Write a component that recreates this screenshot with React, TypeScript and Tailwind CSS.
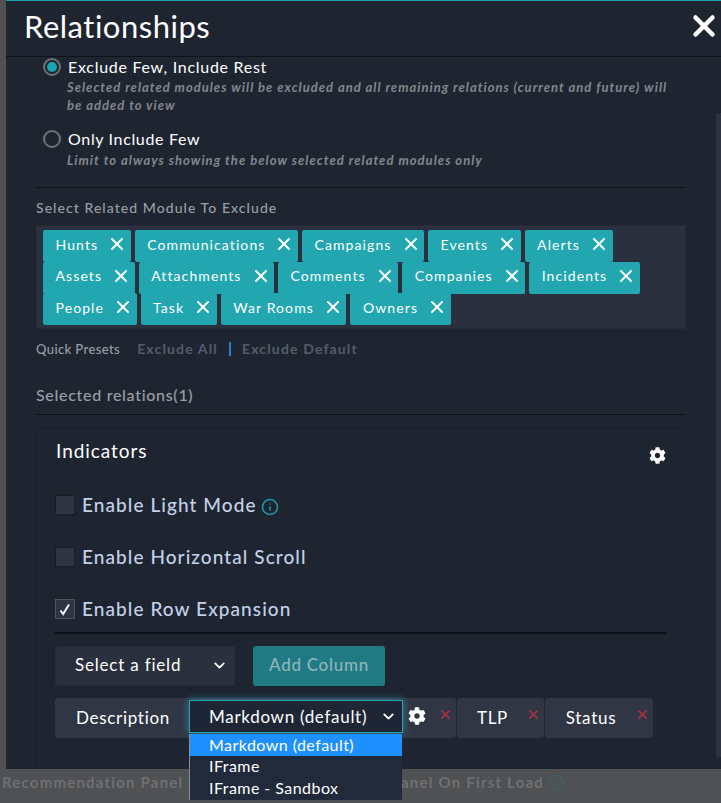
import React from "react";
import { X, Info, ChevronDown } from "lucide-react";
import { FaCog } from "react-icons/fa";

const rows = [
  ["Hunts", "Communications", "Campaigns", "Events", "Alerts"],
  ["Assets", "Attachments", "Comments", "Companies", "Incidents"],
  ["People", "Task", "War Rooms", "Owners"],
];

function Tag({ label }: { label: string }) {
  return (
    <span className="flex h-[32px] items-center gap-[9px] rounded-[2px] bg-[#22a7b1] pb-[4px] pl-[12.5px] pr-[3.5px] text-[14px] tracking-[1.1px] text-white">
      {label}
      <X size={20} strokeWidth={2.4} className="text-white" />
    </span>
  );
}

function CheckRow({ label, checked, info }: { label: string; checked?: boolean; info?: boolean }) {
  return (
    <div className="flex h-[20px] items-center gap-[7px]">
      <span className={`flex h-[20px] w-[20px] items-center justify-center border bg-[#2e3443] ${checked ? "border-[#4c515c]" : "border-[#171c25]"}`}>
        {checked && (
          <svg width="12" height="13" viewBox="0 0 12 13" fill="none">
            <path d="M1.5 7.5 L4.2 11 L10 1.5" stroke="white" strokeWidth="2" />
          </svg>
        )}
      </span>
      <span className="text-[19px] leading-[20px] font-medium tracking-[1.07px] text-[#c4d1e8]">{label}</span>
      {info && <Info size={18} className="ml-[-3px] mt-[3px] text-[#1f9aa5]" />}
    </div>
  );
}

function Chip({ label, width }: { label: string; width: string }) {
  return (
    <div className={`relative flex h-[40px] items-center justify-center rounded-[3px] bg-[#303644] pb-[1px] pr-[16px] text-[17px] tracking-[0.7px] text-white ${width}`}>
      {label}
      <X size={15} strokeWidth={1.8} className="absolute right-[3px] top-[9px] text-[#c9303f]" />
    </div>
  );
}

export default function App() {
  return (
    <div className="relative h-[803px] w-[721px] overflow-hidden bg-[#4f5153] font-['Lato','Open_Sans',sans-serif]">
      <div className="ml-[6px] flex h-[769px] flex-col border-t border-[#17a2ad] bg-[#1e2531]">
        <header className="flex h-[56px] shrink-0 items-center justify-between border-b border-[#0e1218] pb-[5px] pl-[18px] pr-[6px]">
          <h1 className="text-[31px] leading-[50px] text-white tracking-[0.5px]">Relationships</h1>
          <X size={34} strokeWidth={3.2} className="mr-[-6px] text-white" />
        </header>

        <div className="flex flex-1 flex-col pl-[30px] pr-[35px]">
          <label className="ml-[7px] flex h-[20px] items-center gap-[6px]">
            <span className="flex h-[18px] w-[18px] items-center justify-center rounded-full border-2 border-[#707274]">
              <span className="h-[10px] w-[10px] rounded-full bg-[#1aa5b0]" />
            </span>
            <span className="ml-[1px] text-[16px] tracking-[0.72px] text-white">Exclude Few, Include Rest</span>
          </label>
          <p className="ml-[31px] mt-[1px] w-[610px] text-[13px] leading-[18px] font-bold italic tracking-[1px] text-[#82868d]">
            Selected related modules will be excluded and all remaining relations (current and future) will be added to view
          </p>
          <label className="ml-[7px] mt-[15px] flex h-[20px] items-center gap-[6px]">
            <span className="h-[18px] w-[18px] rounded-full border-2 border-[#707274]" />
            <span className="ml-[1px] text-[16px] tracking-[0.65px] text-white">Only Include Few</span>
          </label>
          <p className="ml-[31px] mt-[2px] text-[13px] leading-[18px] font-bold italic tracking-[1.03px] text-[#82868d]">
            Limit to always showing the below selected related modules only
          </p>
          <div className="mt-[18px] h-px bg-[#0e1218]" />

          <div className="mt-[11px] text-[14px] leading-[17px] font-medium tracking-[1.06px] text-[#9a9ea5]">Select Related Module To Exclude</div>
          <div className="mt-[9px] h-[104px] border border-[#252b37] bg-[#2b303e] px-[6px] pt-[4px]">
            {rows.map((row) => (
              <div key={row[0]} className="mb-[-0.5px] flex gap-[4px]">
                {row.map((t) => (
                  <Tag key={t} label={t} />
                ))}
              </div>
            ))}
          </div>
          <div className="mt-[12px] flex h-[16px] items-center text-[14px]">
            <span className="mt-[1px] text-[13px] font-medium tracking-[0.4px] text-[#9a9ea5]">Quick Presets</span>
            <span className="mb-[1px] ml-[17px] font-bold tracking-[1.15px] text-[#545c69]">Exclude All</span>
            <span className="mx-[11px] h-[14px] w-[2px] bg-[#2a7fc4]" />
            <span className="mb-[1px] font-bold tracking-[1.15px] text-[#545c69]">Exclude Default</span>
          </div>
          <div className="mt-[28px] text-[16px] leading-[20px] font-medium tracking-[0.7px] text-[#9a9ea5]">Selected relations(1)</div>
          <div className="mt-[9px] h-px bg-[#0e1218]" />

          <section className="relative mt-[13px] flex-1 border-l border-r border-t border-[#1a202b] pl-[18px] pr-[18px]">
            <div className="flex h-[46px] items-center justify-between pb-[2px]">
              <h2 className="ml-[1px] text-[19px] tracking-[0.95px] text-white">Indicators</h2>
              <span className="mb-[1px] mr-[1px] mt-[10px] text-white"><FaCog size={17} /></span>
            </div>
            <div className="mt-[20px] flex flex-col gap-[32px]">
              <CheckRow label="Enable Light Mode" info />
              <CheckRow label="Enable Horizontal Scroll" />
              <CheckRow label="Enable Row Expansion" checked />
            </div>
            <div className="mt-[13px] h-[2px] bg-[#0e1218]" />
            <div className="mt-[12px] flex gap-[18px]">
              <div className="flex h-[40px] w-[180px] items-center justify-between rounded-[2px] border border-[#252b37] bg-[#2b303e] pb-[2px] pl-[19px] pr-[6px] text-[17px] tracking-[0.8px] text-white">
                Select a field
                <ChevronDown size={17} strokeWidth={2.6} />
              </div>
              <button className="h-[40px] w-[132px] rounded-[3px] bg-[#1f7a84] pb-[2px] text-[17px] font-medium tracking-[0.7px] text-[#8fb4ba]">Add Column</button>
            </div>
            <div className="mt-[12px] flex gap-[1px]">
              <div className="relative flex h-[40px] w-[401px] items-center rounded-[3px] bg-[#303644] pb-[1px] pl-[21px] text-[17px] tracking-[0.7px] text-white">
                Description
                <div className="absolute left-[134px] top-[2px] flex h-[33px] w-[214px] items-center justify-between border border-[#20a5b0] bg-[#1e2635] pl-[19px] pr-[5px] text-[17px] tracking-[0.7px] shadow-[0_0_8px_rgba(70,180,220,0.6)]">
                  Markdown (default)
                  <ChevronDown size={17} strokeWidth={2.6} />
                </div>
                <span className="absolute left-[353px] top-[9px]"><FaCog size={18} /></span>
                <X size={15} strokeWidth={1.8} className="absolute right-[3px] top-[9px] text-[#c9303f]" />
              </div>
              <Chip label="TLP" width="w-[87px]" />
              <Chip label="Status" width="w-[108px]" />
            </div>
            <div className="absolute left-[152px] top-[305px] z-10 h-[66px] w-[213px] border-l border-[#8b8f96] bg-[#212a3a] text-[16px] leading-[22px] tracking-[0.45px] text-white">
              <div className="bg-[#1e90ff] pl-[19px]">Markdown (default)</div>
              <div className="mt-[-1px] pl-[19px]">IFrame</div>
              <div className="pl-[19px]">IFrame - Sandbox</div>
            </div>
          </section>
        </div>
      </div>
      <div className="flex h-[34px] items-center pb-[8px] text-[15px] font-bold tracking-[1.2px] text-[#6e7072]">
        <span className="ml-[2px]">Recommendation Panel</span>
        <span className="ml-[5px]">(</span>
        <span className="ml-[197px]">Panel On First Load</span>
        <Info size={17} className="ml-[4px] text-[#3e6266]" />
      </div>
      <div className="absolute right-0 top-[113px] h-[644px] w-[5px] rounded-l-[3px] bg-[#2d3340]" />
    </div>
  );
}
